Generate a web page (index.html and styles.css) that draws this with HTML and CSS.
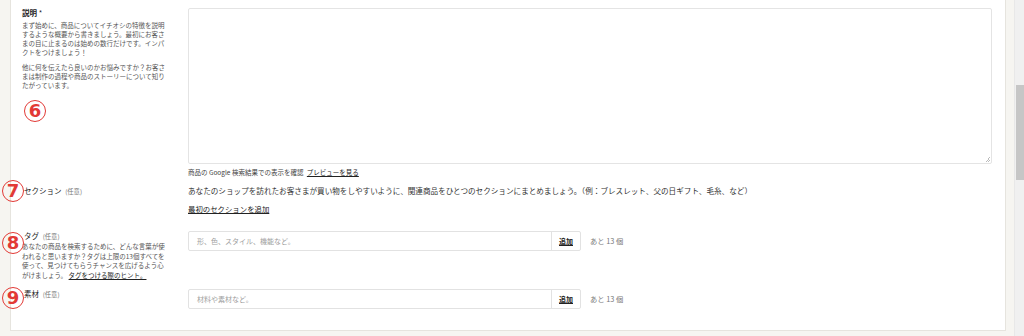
FILE: index.html
```html
<!DOCTYPE html>
<html lang="ja">
<head>
<meta charset="utf-8">
<link rel="stylesheet" href="styles.css">
</head>
<body>
<div class="page">
  <div class="gutter"></div>
  <main class="card">
    <section class="row row-desc">
      <div class="label-col">
        <div class="label">説明 <span class="req">*</span></div>
        <p class="help">まず始めに、商品についてイチオシの特徴を説明するような概要から書きましょう。最初にお客さまの目に止まるのは始めの数行だけです。インパクトをつけましょう！</p>
        <p class="help">他に何を伝えたら良いのかお悩みですか？お客さまは制作の過程や商品のストーリーについて知りたがっています。</p>
        <span class="mark mark-6">6</span>
      </div>
      <div class="field-col">
        <div class="textarea"><span class="grip"></span></div>
        <div class="hint">商品の Google 検索結果での表示を確認 <a class="link">プレビューを見る</a></div>
      </div>
    </section>

    <section class="row row-section">
      <div class="label-col">
        <div class="label plain">セクション <span class="opt">(任意)</span></div>
        <span class="mark mark-7">7</span>
      </div>
      <div class="field-col">
        <div class="text">あなたのショップを訪れたお客さまが買い物をしやすいように、関連商品をひとつのセクションにまとめましょう。（例：ブレスレット、父の日ギフト、毛糸、など）</div>
        <a class="link text-link">最初のセクションを追加</a>
      </div>
    </section>

    <section class="row row-tag">
      <div class="label-col">
        <div class="label plain">タグ <span class="opt">(任意)</span></div>
        <p class="help tight">あなたの商品を検索するために、どんな言葉が使われると思いますか？タグは上限の13個すべてを使って、見つけてもらうチャンスを広げるよう心<br><span>がけましょう。</span> <a class="link">タグをつける際のヒント。</a></p>
        <span class="mark mark-8">8</span>
      </div>
      <div class="field-col">
        <div class="input-line">
          <div class="input"><span class="ph">形、色、スタイル、機能など。</span><span class="btn">追加</span></div>
          <span class="count">あと 13 個</span>
        </div>
      </div>
    </section>

    <section class="row row-mat">
      <div class="label-col">
        <div class="label plain">素材 <span class="opt">(任意)</span></div>
        <span class="mark mark-9">9</span>
      </div>
      <div class="field-col">
        <div class="input-line">
          <div class="input"><span class="ph">材料や素材など。</span><span class="btn">追加</span></div>
          <span class="count">あと 13 個</span>
        </div>
      </div>
    </section>
  </main>
  <div class="gap"></div>
  <div class="scrollbar"><div class="thumb"></div></div>
</div>
</body>
</html>
```

FILE: styles.css
```css
* { box-sizing: border-box; }
html, body {
  margin: 0;
  padding: 0;
  height: 336px;
  overflow: hidden;
}
body {
  background: #f6f5f1;
  font-family: "Noto Sans CJK JP", "Noto Sans", sans-serif;
  color: #333;
}
.page {
  display: flex;
  height: 336px;
}
.gutter { width: 10px; flex: none; }
.card {
  width: 996px;
  flex: none;
  height: 331px;
  background: #fff;
  border: 1px solid #e6e4de;
  border-top: none;
  position: relative;
}
.gap { width: 8px; flex: none; }
.scrollbar {
  width: 10px;
  flex: none;
  background: #f0f0f0;
  border-left: 1px solid #e8e8e8;
  padding-top: 85px;
}
.thumb {
  width: 8px;
  margin-left: 1px;
  height: 95px;
  background: #c6c6c6;
}

.row {
  display: grid;
  grid-template-columns: 166px 804px;
  padding-left: 11px;
  position: relative;
}
.label-col { position: relative; padding-right: 16px; }
.label {
  font-size: 7.5px;
  font-weight: bold;
  color: #222;
  line-height: 10px;
}
.label.plain { font-weight: normal; padding-left: 2px; }
.req { font-weight: normal; }
.opt { font-size: 6.3px; color: #777; margin-left: 2px; }
.help {
  margin: 2.5px 0 0;
  width: 146px;
  font-size: 6.5px;
  line-height: 9px;
  color: #555;
}
.help + .help { margin-top: 6px; }
.help.tight { margin-top: 0; line-height: 9.6px; }
.link {
  color: #222;
  text-decoration: underline;
}

.row-desc { padding-top: 8px; height: 178px; }
.textarea {
  height: 156px;
  border: 1px solid #e4e4e4;
  border-radius: 2px;
  background: #fff;
  position: relative;
}
.grip {
  position: absolute;
  right: 1px;
  bottom: 1px;
  width: 5px;
  height: 5px;
  background: linear-gradient(135deg, transparent 50%, #bbb 50%, #bbb 60%, transparent 60%, transparent 75%, #bbb 75%, #bbb 85%, transparent 85%);
}
.hint {
  margin-top: 3px;
  font-size: 6.5px;
  line-height: 10px;
  color: #444;
}
.hint .link { margin-left: 2px; }

.row-section { height: 46px; padding-top: 8px; }
.text {
  font-size: 7.6px;
  line-height: 10px;
  color: #333;
}
.text-link {
  display: block;
  margin-top: 8px;
  font-size: 7.4px;
  line-height: 10px;
}

.row-tag { height: 59px; padding-top: 7px; }
.input-line {
  display: flex;
  align-items: center;
}
.input {
  width: 393px;
  height: 20px;
  border: 1px solid #e2e2e2;
  border-radius: 2px;
  display: flex;
  align-items: center;
  justify-content: space-between;
}
.ph {
  padding-left: 8px;
  font-size: 7px;
  color: #a0a0a0;
}
.btn {
  height: 100%;
  width: 29px;
  border-left: 1px solid #e2e2e2;
  font-size: 7px;
  font-weight: bold;
  color: #222;
  display: flex;
  align-items: center;
  justify-content: center;
  text-decoration: underline;
}
.count {
  margin-left: 9px;
  font-size: 7.3px;
  color: #777;
}
.row-mat { padding-top: 6px; }

.mark {
  position: absolute;
  width: 22px;
  height: 22px;
  border: 1.8px solid #e23a36;
  border-radius: 50%;
  color: #e23a36;
  font-family: "DejaVu Sans", sans-serif;
  font-weight: bold;
  font-size: 18px;
  line-height: 19px;
  text-align: center;
}
.mark-6 { left: 2px; top: 92px; }
.mark-7 { left: -20px; top: -6px; }
.mark-8 { left: -20px; top: 1px; }
.mark-9 { left: -20px; top: -2px; }
```
